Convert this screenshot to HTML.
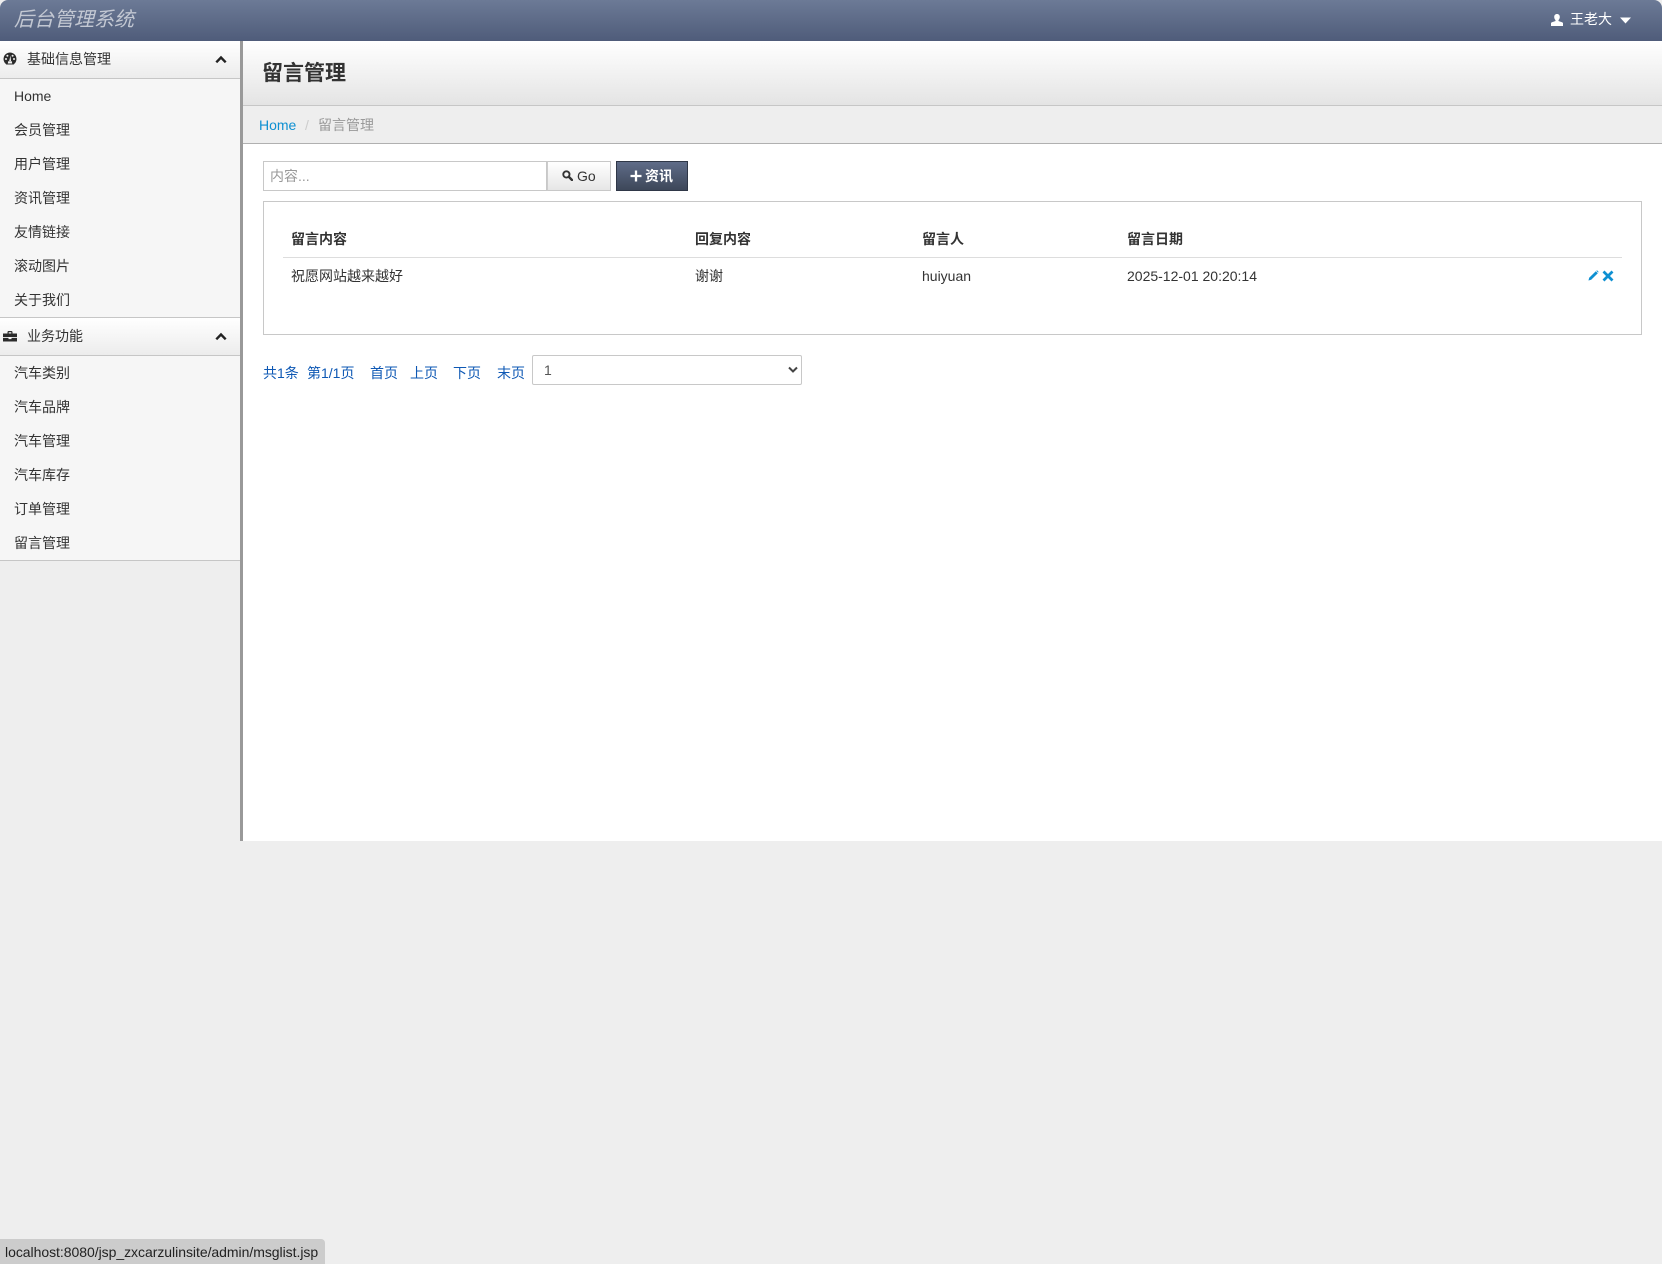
<!DOCTYPE html>
<html lang="zh">
<head>
<meta charset="utf-8">
<title>留言管理</title>
<style>
html,body{margin:0;padding:0;width:1662px;height:1264px;overflow:hidden;background:#eee;}
body{position:relative;font:14px/20px "Liberation Sans","Noto Sans CJK SC",sans-serif;color:#333;}
.a{position:absolute;white-space:nowrap;}
.t{position:absolute;white-space:nowrap;line-height:20px;}
.item{position:absolute;left:14px;white-space:nowrap;line-height:20px;color:#333;}
.th{position:absolute;white-space:nowrap;line-height:20px;font-weight:bold;color:#333;}
.pg{position:absolute;white-space:nowrap;line-height:20px;color:#0e58b4;top:363px;}
svg{position:absolute;display:block;}
</style>
</head>
<body>
<!-- top bar -->
<div class="a" style="left:0;top:0;width:1662px;height:41px;background:linear-gradient(#6c7a96,#4f5c7a);border-radius:8px 8px 0 0;"></div>
<div class="t" style="left:14px;top:8px;font-size:20px;line-height:24px;font-style:italic;color:#c3c8d3;">后台管理系统</div>
<svg style="left:1551px;top:14px" width="12" height="12" viewBox="0 0 12 12"><path d="M6 0c1.800 0 2.800 1.200 2.800 3 0 1.300-.6 2.500-1.300 3.100v.8c0 .5 4 1 4.500 2.100V12H0V9c.5-1.100 4.500-1.600 4.500-2.100v-.8C3.800 5.500 3.200 4.300 3.200 3 3.200 1.200 4.200 0 6 0z" fill="#fff"/></svg>
<div class="t" style="left:1570px;top:9px;color:#fff;font-size:14px;">王老大</div>
<svg style="left:1620px;top:17px" width="11" height="7" viewBox="0 0 11 7"><path d="M0 .5h11L5.500 6.500z" fill="#fff"/></svg>

<!-- sidebar -->
<div class="a" style="left:0;top:41px;width:240px;height:800px;background:#eee;"></div>
<div class="a" style="left:240px;top:41px;width:3px;height:800px;background:#999;"></div>

<div class="a" style="left:0;top:41px;width:240px;height:37px;background:linear-gradient(#fff,#ececec);border-bottom:1px solid #c6c6c6;"></div>
<svg style="left:3px;top:52px" width="14" height="14" viewBox="0 0 14 14"><path d="M7 .5a6.500 6.500 0 0 1 5.700 9.600L10.800 12.500H3.200L1.300 10.100A6.500 6.500 0 0 1 7 .5z" fill="#2b2b2b"/><circle cx="3" cy="7" r="1" fill="#f2f2f2"/><circle cx="4.400" cy="3.800" r="1" fill="#f2f2f2"/><circle cx="9.600" cy="3.800" r="1" fill="#f2f2f2"/><circle cx="11" cy="7" r="1" fill="#f2f2f2"/><path d="M7.500 3.500L6.200 9h1.800z" fill="#f2f2f2"/><path d="M5.200 9.300h3.600l.4 2.200H4.800z" fill="#f2f2f2"/></svg>
<div class="t" style="left:27px;top:49px;">基础信息管理</div>
<svg style="left:215px;top:55px" width="12" height="9" viewBox="0 0 12 9"><path d="M1.300 7.300L6 2.500l4.700 4.800" fill="none" stroke="#222" stroke-width="2.400"/></svg>

<div class="a" style="left:0;top:79px;width:240px;height:238px;background:#f6f6f6;border-bottom:1px solid #c6c6c6;"></div>
<div class="item" style="top:86px;">Home</div>
<div class="item" style="top:120px;">会员管理</div>
<div class="item" style="top:154px;">用户管理</div>
<div class="item" style="top:188px;">资讯管理</div>
<div class="item" style="top:222px;">友情链接</div>
<div class="item" style="top:256px;">滚动图片</div>
<div class="item" style="top:290px;">关于我们</div>

<div class="a" style="left:0;top:318px;width:240px;height:37px;background:linear-gradient(#fff,#ececec);border-bottom:1px solid #c6c6c6;"></div>
<svg style="left:3px;top:331px" width="14" height="11" viewBox="0 0 14 11"><path d="M4.500 2.500V1C4.500 .5 5 0 5.500 0h3c.5 0 1 .5 1 1v1.500H14V6H0V2.500zM5.700 2.500h2.600V1.200H5.700z" fill="#2b2b2b" fill-rule="evenodd"/><path d="M0 6.900h5.500v1.200h3V6.900H14V10.500H0z" fill="#2b2b2b"/></svg>
<div class="t" style="left:27px;top:326px;">业务功能</div>
<svg style="left:215px;top:332px" width="12" height="9" viewBox="0 0 12 9"><path d="M1.300 7.300L6 2.500l4.700 4.800" fill="none" stroke="#222" stroke-width="2.400"/></svg>

<div class="a" style="left:0;top:356px;width:240px;height:204px;background:#f6f6f6;border-bottom:1px solid #c6c6c6;"></div>
<div class="item" style="top:363px;">汽车类别</div>
<div class="item" style="top:397px;">汽车品牌</div>
<div class="item" style="top:431px;">汽车管理</div>
<div class="item" style="top:465px;">汽车库存</div>
<div class="item" style="top:499px;">订单管理</div>
<div class="item" style="top:533px;">留言管理</div>

<!-- main -->
<div class="a" style="left:243px;top:41px;width:1419px;height:800px;background:#fff;"></div>
<div class="a" style="left:243px;top:41px;width:1419px;height:64px;background:linear-gradient(#fff,#e4e4e4);border-bottom:1px solid #c6c6c6;"></div>
<div class="t" style="left:262px;top:60px;font-size:21px;line-height:28px;font-weight:bold;color:#333;">留言管理</div>
<div class="a" style="left:243px;top:106px;width:1419px;height:37px;background:#eee;border-bottom:1px solid #b0b0b0;"></div>
<div class="t" style="left:259px;top:115px;color:#0e90d2;">Home</div>
<div class="t" style="left:305px;top:115px;color:#ccc;">/</div>
<div class="t" style="left:318px;top:115px;color:#999;">留言管理</div>

<!-- search -->
<div class="a" style="left:263px;top:161px;width:282px;height:28px;background:#fff;border:1px solid #c8c8c8;"></div>
<div class="t" style="left:270px;top:166px;color:#999;">内容...</div>
<div class="a" style="left:547px;top:161px;width:62px;height:28px;background:linear-gradient(#fff,#e6e6e6);border:1px solid #c8c8c8;border-left-color:#ccc;"></div>
<svg style="left:562px;top:170px" width="11" height="11" viewBox="0 0 13 13"><circle cx="5.200" cy="5.200" r="3.700" fill="none" stroke="#333" stroke-width="2.200"/><path d="M8 8l3.800 3.800" stroke="#333" stroke-width="2.800" stroke-linecap="round"/></svg>
<div class="t" style="left:577px;top:166px;color:#333;">Go</div>
<div class="a" style="left:616px;top:161px;width:70px;height:28px;background:linear-gradient(#5f6c88,#3d4759);border:1px solid #2f3747;"></div>
<svg style="left:630px;top:170px" width="12" height="12" viewBox="0 0 12 12"><path d="M6 .5v11M.5 6h11" stroke="#fff" stroke-width="2.300"/></svg>
<div class="t" style="left:645px;top:166px;color:#fff;font-weight:bold;">资讯</div>

<!-- table box -->
<div class="a" style="left:263px;top:201px;width:1377px;height:132px;background:#fff;border:1px solid #c8c8c8;"></div>
<div class="a" style="left:283px;top:257px;width:1339px;height:1px;background:#ddd;"></div>
<div class="th" style="left:291px;top:229px;">留言内容</div>
<div class="th" style="left:695px;top:229px;">回复内容</div>
<div class="th" style="left:922px;top:229px;">留言人</div>
<div class="th" style="left:1127px;top:229px;">留言日期</div>
<div class="t" style="left:291px;top:266px;">祝愿网站越来越好</div>
<div class="t" style="left:695px;top:266px;">谢谢</div>
<div class="t" style="left:922px;top:266px;">huiyuan</div>
<div class="t" style="left:1127px;top:266px;">2025-12-01 20:20:14</div>
<svg style="left:1588px;top:270px" width="11" height="11" viewBox="0 0 12 12"><path d="M.5 11.500l.8-3L8.500 1.300l2.200 2.200L3.500 10.700z" fill="#0e90d2"/><path d="M9 .8l1-.4 1.500 1.500-.4 1z" fill="#0e90d2"/></svg>
<svg style="left:1602px;top:270px" width="12" height="12" viewBox="0 0 12 12"><path d="M1.500 1.500l9 9M10.500 1.500l-9 9" stroke="#0e90d2" stroke-width="2.700"/></svg>

<!-- pagination -->
<div class="pg" style="left:263px;">共1条</div>
<div class="pg" style="left:307px;">第1/1页</div>
<div class="pg" style="left:370px;">首页</div>
<div class="pg" style="left:410px;">上页</div>
<div class="pg" style="left:453px;">下页</div>
<div class="pg" style="left:497px;">末页</div>
<div class="a" style="left:532px;top:355px;width:268px;height:28px;background:#fff;border:1px solid #c8c8c8;border-radius:2px;"></div>
<div class="t" style="left:544px;top:360px;color:#555;">1</div>
<svg style="left:788px;top:366px" width="10" height="8" viewBox="0 0 10 8"><path d="M1 1.500l4 4 4-4" fill="none" stroke="#444" stroke-width="2"/></svg>

<!-- status bar -->
<div class="a" style="left:0;top:1239px;width:325px;height:25px;background:#ccc;border-radius:0 4px 0 0;"></div>
<div class="t" style="left:5px;top:1242px;font-size:14px;color:#222;letter-spacing:-.04px;">localhost:8080/jsp_zxcarzulinsite/admin/msglist.jsp</div>
</body>
</html>
